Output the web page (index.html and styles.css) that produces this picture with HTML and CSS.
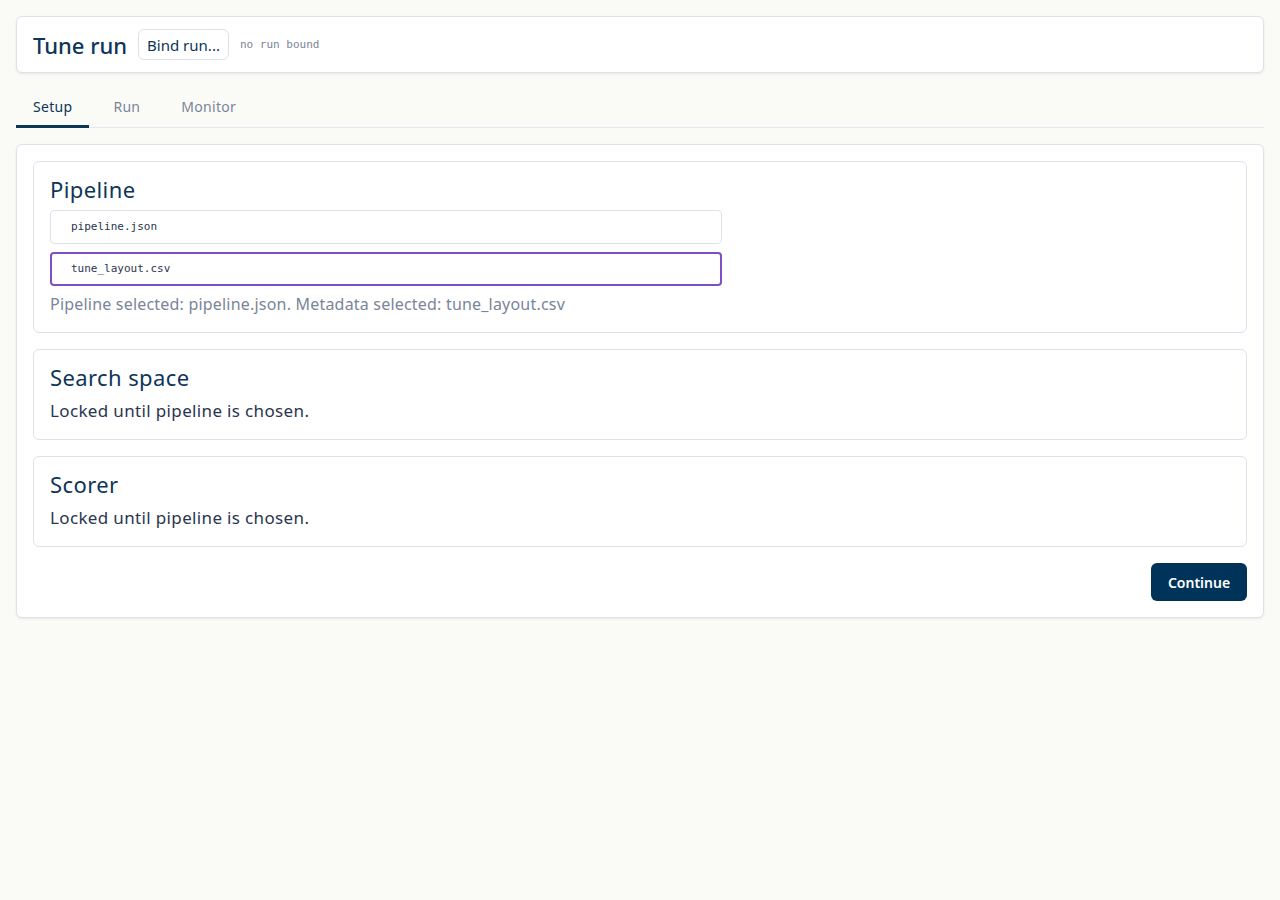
FILE: index.html
```html
<!DOCTYPE html>
<html lang="en">
<head>
    <meta charset="UTF-8">
    <title>Tune run</title>
    <link rel="stylesheet" href="styles.css">
</head>
<body>
    <div class="page">
        <div class="topbar">
            <h1>Tune run</h1>
            <button class="btn-bind">Bind run...</button>
            <span class="run-status">no run bound</span>
        </div>

        <div class="tabs">
            <div class="tab active">Setup</div>
            <div class="tab">Run</div>
            <div class="tab">Monitor</div>
        </div>

        <div class="panel">
            <div class="section">
                <h2>Pipeline</h2>
                <div class="field">pipeline.json</div>
                <div class="field focused">tune_layout.csv</div>
                <p class="hint">Pipeline selected: pipeline.json. Metadata selected: tune_layout.csv</p>
            </div>

            <div class="section">
                <h2>Search space</h2>
                <p>Locked until pipeline is chosen.</p>
            </div>

            <div class="section">
                <h2>Scorer</h2>
                <p>Locked until pipeline is chosen.</p>
            </div>

            <div class="actions">
                <button class="btn-primary">Continue</button>
            </div>
        </div>
    </div>
</body>
</html>
```

FILE: styles.css
```css
* {
    margin: 0;
    padding: 0;
    box-sizing: border-box;
}

body {
    font-family: 'Noto Sans', sans-serif;
    color: #2a3550;
    background: #fafbf7;
    padding: 16px;
}

.topbar {
    display: flex;
    align-items: center;
    gap: 11px;
    height: 57px;
    padding: 0 16px;
    background: white;
    border: 1px solid #dde2ea;
    border-radius: 6px;
    box-shadow: 0 1px 3px rgba(0,0,0,0.08);
}

.topbar h1 {
    font-size: 22px;
    font-weight: 500;
    color: #0d3558;
}

.btn-bind {
    font-family: inherit;
    font-size: 15px;
    color: #0d3558;
    background: white;
    border: 1px solid #dde2ea;
    border-radius: 6px;
    height: 31px;
    padding: 0 8px;
}

.run-status {
    font-family: 'DejaVu Sans Mono', monospace;
    font-size: 11px;
    color: #7a8599;
}

.tabs {
    display: flex;
    gap: 7px;
    margin-top: 16px;
    border-bottom: 1px solid #e3e7ee;
}

.tab {
    font-size: 14px;
    letter-spacing: 0.3px;
    color: #7a8599;
    padding: 0 17px;
    height: 39px;
    line-height: 35px;
    border-bottom: 3px solid transparent;
    margin-bottom: -1px;
}

.tab.active {
    color: #0d3558;
    border-bottom-color: #0d3558;
}

.panel {
    margin-top: 16px;
    padding: 16px;
    background: white;
    border: 1px solid #dde2ea;
    border-radius: 6px;
    box-shadow: 0 1px 3px rgba(0,0,0,0.08);
    display: flex;
    flex-direction: column;
    gap: 16px;
}

.section {
    border: 1px solid #dde2ea;
    border-radius: 6px;
    padding: 12px 16px 15px;
}

.section h2 {
    font-size: 22px;
    font-weight: 400;
    letter-spacing: 0.4px;
    color: #0d3558;
    line-height: 30px;
    margin-bottom: 6px;
}

.section p {
    font-size: 17px;
    letter-spacing: 0.35px;
    line-height: 26px;
}

.field {
    width: 672px;
    height: 34px;
    line-height: 32px;
    padding: 0 20px;
    border: 1px solid #dde2ea;
    border-radius: 4px;
    font-family: 'DejaVu Sans Mono', monospace;
    font-size: 11px;
    color: #2a3550;
    margin-bottom: 8px;
}

.field.focused {
    border: 2px solid #7d4fc0;
    line-height: 30px;
    padding: 0 19px;
}

.section .hint {
    font-size: 16px;
    letter-spacing: 0.2px;
    color: #7a8599;
    margin-top: -3px;
}

.actions {
    display: flex;
    justify-content: flex-end;
}

.btn-primary {
    font-family: inherit;
    font-size: 14px;
    font-weight: 600;
    color: white;
    background: #00335a;
    border: none;
    border-radius: 6px;
    width: 96px;
    height: 38px;
}
```
